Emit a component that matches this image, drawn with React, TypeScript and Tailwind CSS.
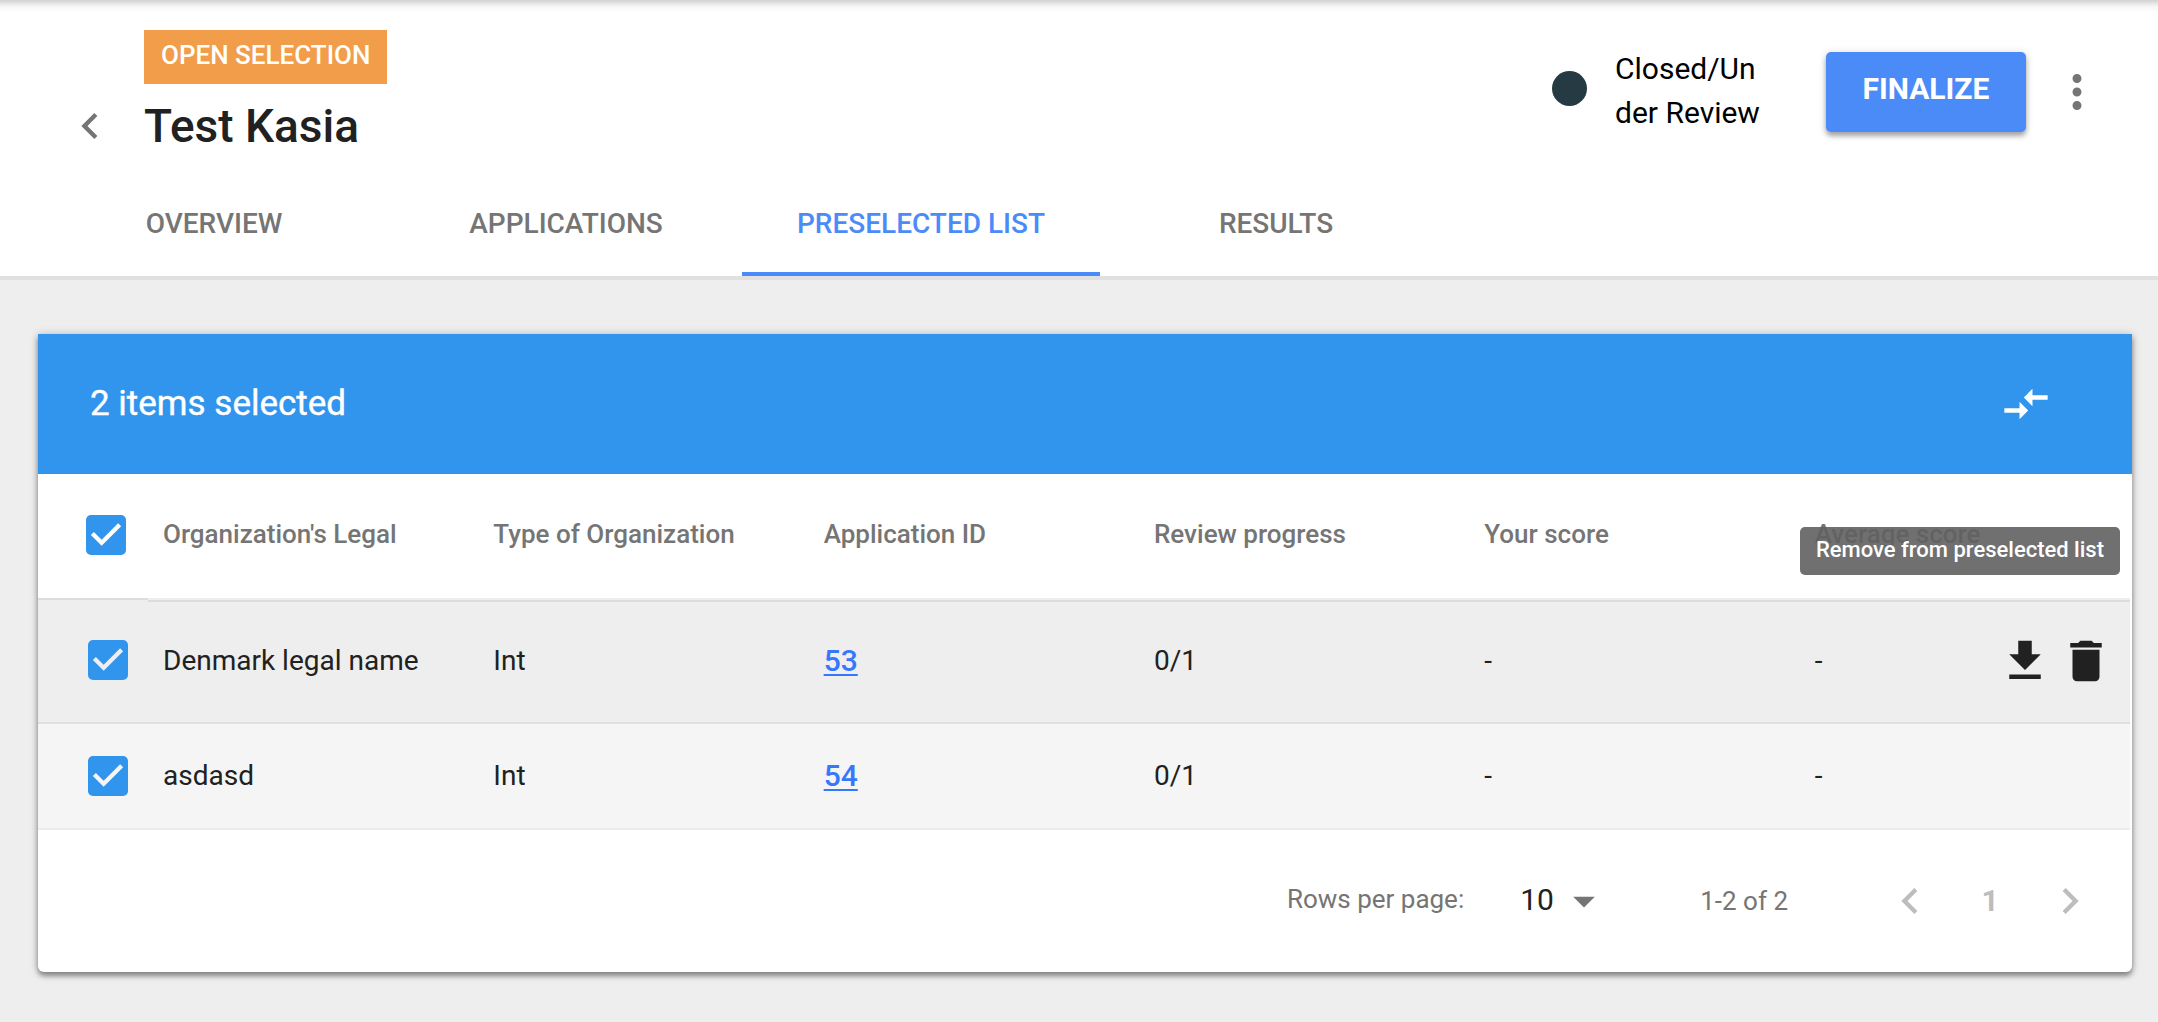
import React from 'react';

type Application = {
  id: number;
  name: string;
  type: string;
  progress: string;
  score: string;
  average: string;
};

const applications: Application[] = [
  { id: 53, name: 'Denmark legal name', type: 'Int', progress: '0/1', score: '-', average: '-' },
  { id: 54, name: 'asdasd', type: 'Int', progress: '0/1', score: '-', average: '-' },
];

const columns = [
  "Organization's Legal",
  'Type of Organization',
  'Application ID',
  'Review progress',
  'Your score',
  'Average score',
];

const tabs = ['OVERVIEW', 'APPLICATIONS', 'PRESELECTED LIST', 'RESULTS'];

const paths = {
  chevronLeft: 'M15.41 7.41L14 6l-6 6 6 6 1.41-1.41L10.83 12z',
  chevronRight: 'M10 6L8.59 7.41 13.17 12l-4.58 4.59L10 18l6-6z',
  more: 'M12 8c1.1 0 2-.9 2-2s-.9-2-2-2-2 .9-2 2 .9 2 2 2zm0 2c-1.1 0-2 .9-2 2s.9 2 2 2 2-.9 2-2-.9-2-2-2zm0 6c-1.1 0-2 .9-2 2s.9 2 2 2 2-.9 2-2-.9-2-2-2z',
  compare: 'M9.01 14H2v2h7.01v3L13 15l-3.99-4v3zm5.98-1v-3H22V8h-7.01V5L11 9l3.99 4z',
  download: 'M19 9h-4V3H9v6H5l7 7 7-7zM5 18v2h14v-2H5z',
  trash: 'M6 19c0 1.1.9 2 2 2h8c1.1 0 2-.9 2-2V7H6v12zM19 4h-3.5l-1-1h-5l-1 1H5v2h14V4z',
  dropDown: 'M7 10l5 5 5-5z',
  check: 'M10 17l-5-5 1.41-1.41L10 14.17l7.59-7.59L19 8l-9 9z',
};

function Icon({ d, className = 'size-[54px]' }: { d: string; className?: string }) {
  return (
    <svg viewBox="0 0 24 24" fill="currentColor" aria-hidden="true" className={className}>
      <path d={d} />
    </svg>
  );
}

function Checkbox({ label, tick = 'text-white' }: { label: string; tick?: string }) {
  return (
    <label className="relative block size-10 cursor-pointer">
      <input
        type="checkbox"
        defaultChecked
        aria-label={label}
        className="peer block size-10 cursor-pointer appearance-none rounded-[5px] border-4 border-[#757575] checked:border-0 checked:bg-[#3194ed]"
      />
      <span className={`pointer-events-none absolute inset-0 hidden items-center justify-center peer-checked:flex ${tick}`}>
        <Icon d={paths.check} className="size-[52px] shrink-0" />
      </span>
    </label>
  );
}

function PageHeader() {
  return (
    <header className="border-b-4 border-[#e0e0e0] bg-white">
      <div className="h-3 bg-linear-to-b from-[#d2d2d2] via-[#f4f4f4] to-white" />
      <div className="flex h-40 items-start justify-between pt-[18px] pr-[54px] pl-16">
        <div className="flex items-end gap-7">
          <button type="button" aria-label="Back" className="flex h-14 w-[52px] items-center text-[#757575]">
            <Icon d={paths.chevronLeft} className="size-[52px]" />
          </button>
          <div>
            <span className="inline-block h-[54px] bg-[#f19d4a] px-[17px] text-[26px] leading-[50px] font-medium text-white">
              OPEN SELECTION
            </span>
            <h1 className="mt-3.5 text-[46px] leading-[56px] font-medium text-[#212121]">Test Kasia</h1>
          </div>
        </div>
        <div className="mt-[18px] flex h-[88px] items-center">
          <span className="mr-7 mb-2 size-[35px] rounded-full bg-[#263a43]" />
          <p className="mr-15 w-[151px] pb-0.5 text-[30px] leading-[44px] break-all text-black">Closed/Under Review</p>
          <button
            type="button"
            className="h-20 w-[200px] rounded-[5px] bg-[#4b8bf8] pb-2 text-[30px] font-bold text-white shadow-[0_4px_5px_rgba(0,0,0,0.3),0_1px_8px_rgba(0,0,0,0.15)]"
          >
            FINALIZE
          </button>
          <button type="button" aria-label="More options" className="ml-6 text-[#757575]">
            <Icon d={paths.more} />
          </button>
        </div>
      </div>
      <nav aria-label="Selection sections" className="flex pl-[38px]">
        {tabs.map((tab) => {
          const active = tab === 'PRESELECTED LIST';
          return (
            <a
              key={tab}
              href="#"
              aria-current={active ? 'page' : undefined}
              className={`flex h-[104px] items-center justify-center border-b-4 pt-1 text-[28px] font-medium ${
                active ? 'w-[358px] border-[#4b8bf8] text-[#4b8bf8]' : 'w-[352px] border-transparent text-[#757575]'
              }`}
            >
              {tab}
            </a>
          );
        })}
      </nav>
    </header>
  );
}

function RowActions({ name }: { name: string }) {
  return (
    <div className="flex items-center gap-[7px]">
      <button type="button" aria-label={`Download ${name}`}>
        <Icon d={paths.download} />
      </button>
      <div className="relative">
        <button type="button" aria-label={`Remove ${name}`} aria-describedby="remove-tip" className="block">
          <Icon d={paths.trash} />
        </button>
        <span
          id="remove-tip"
          role="tooltip"
          className="absolute -right-[7px] bottom-full mb-[59px] h-12 rounded-[5px] bg-[#616161]/90 px-4 text-[22px] leading-[45px] font-medium whitespace-nowrap text-white"
        >
          Remove from preselected list
        </span>
      </div>
    </div>
  );
}

function ApplicationsTable() {
  return (
    <div className="pr-0.5">
      <table className="w-full table-fixed border-separate border-spacing-0 text-left">
        <colgroup>
          <col className="w-[110px]" />
          {columns.map((c) => (
            <col key={c} />
          ))}
        </colgroup>
        <thead>
          <tr className="h-[126px]">
            <th scope="col" className="border-b-2 border-[#dcdcdc] pb-0.5 pl-12">
              <Checkbox label="Select all" />
            </th>
            {columns.map((c) => (
              <th key={c} scope="col" className="border-b-2 border-[#eee] pb-1 pl-[15px] text-[26px] font-medium text-[#757575]">
                {c}
              </th>
            ))}
          </tr>
        </thead>
        <tbody className="text-[28px] text-[#212121]">
          {applications.map((a, i) => {
            const first = i === 0;
            const cell = first
              ? 'border-t-2 border-b-2 border-t-[#dcdcdc] border-b-[#e0e0e0] pb-0.5 pl-[15px]'
              : 'border-b-2 border-[#ebebeb] pl-[15px]';
            return (
              <tr key={a.id} className={first ? 'h-[124px] bg-[#eee]' : 'h-[106px] bg-[#f5f5f5]'}>
                <td className={first ? 'border-b-2 border-[#e0e0e0] pb-0.5 pl-[50px]' : 'border-b-2 border-[#ebebeb] pl-[50px]'}>
                  <Checkbox label={`Select ${a.name}`} tick={first ? 'text-[#eee]' : 'text-[#f5f5f5]'} />
                </td>
                <td className={cell}>{a.name}</td>
                <td className={cell}>{a.type}</td>
                <td className={cell}>
                  <a href="#" className="block pb-0.5 text-[30px] font-medium text-[#3578fd] underline decoration-2 underline-offset-3">
                    {a.id}
                  </a>
                </td>
                <td className={cell}>{a.progress}</td>
                <td className={cell}>{a.score}</td>
                <td className={cell}>
                  <div className="flex items-center justify-between pr-[17px]">
                    {a.average}
                    {first && <RowActions name={a.name} />}
                  </div>
                </td>
              </tr>
            );
          })}
        </tbody>
      </table>
    </div>
  );
}

function Pagination() {
  return (
    <div className="flex h-[142px] items-center justify-end pr-9 text-[26px] text-[#757575]">
      <label htmlFor="rows-per-page" className="pb-1">
        Rows per page:
      </label>
      <div className="relative ml-14 flex items-center">
        <select
          id="rows-per-page"
          defaultValue="10"
          className="w-[90px] appearance-none bg-transparent pb-1 text-[30px] text-[#212121]"
        >
          <option>10</option>
          <option>25</option>
          <option>50</option>
        </select>
        <span className="pointer-events-none absolute right-0">
          <Icon d={paths.dropDown} className="size-[52px]" />
        </span>
      </div>
      <span className="ml-[90px]">1-2 of 2</span>
      <div className="ml-24 flex items-center text-[#bdbdbd]">
        <button type="button" aria-label="Previous page">
          <Icon d={paths.chevronLeft} className="size-[52px]" />
        </button>
        <span className="w-[108px] pb-0.5 text-center text-[30px] font-bold">1</span>
        <button type="button" aria-label="Next page">
          <Icon d={paths.chevronRight} className="size-[52px]" />
        </button>
      </div>
    </div>
  );
}

export default function App() {
  return (
    <div className="min-h-screen bg-[#eee] font-['Roboto',sans-serif]">
      <PageHeader />
      <main className="pt-[54px] pr-[26px] pb-12 pl-[38px]">
        <section className="rounded-b-md bg-white shadow-[0_4px_5px_rgba(0,0,0,0.35),0_1px_8px_rgba(0,0,0,0.25)]">
          <div className="flex h-[140px] items-center justify-between bg-[#3194ed] pr-20 pl-[52px] text-white">
            <h2 className="text-[35px] [-webkit-text-stroke:0.4px_white]">2 items selected</h2>
            <button type="button" aria-label="Compare">
              <Icon d={paths.compare} className="size-[52px]" />
            </button>
          </div>
          <ApplicationsTable />
          <Pagination />
        </section>
      </main>
    </div>
  );
}
